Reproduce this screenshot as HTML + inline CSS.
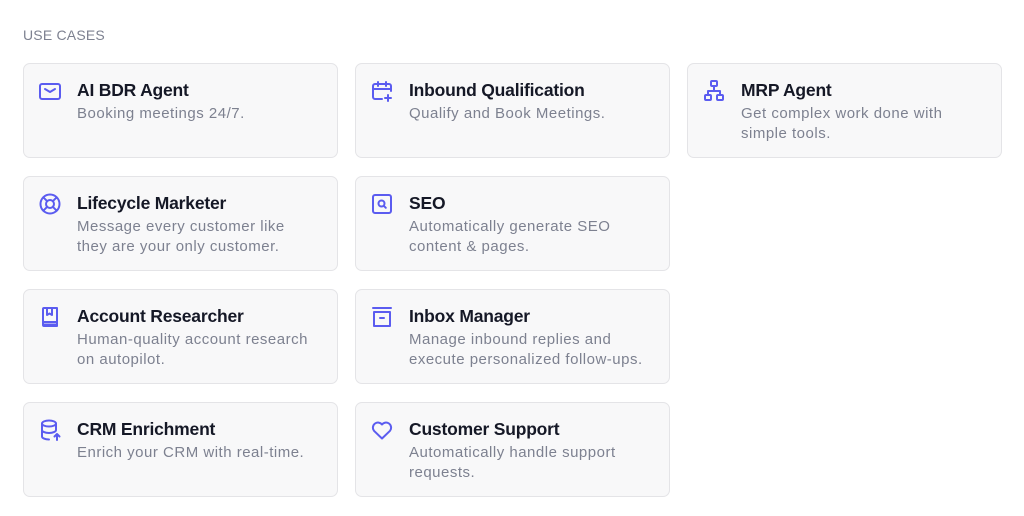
<!DOCTYPE html>
<html><head><meta charset="utf-8"><style>
*{margin:0;padding:0;box-sizing:border-box}
body{width:1024px;height:516px;background:#fff;font-family:"Liberation Sans",sans-serif;position:relative;overflow:hidden}
.h{position:absolute;left:23px;top:27px;font-size:14px;color:#7d8190;letter-spacing:0.2px}
.c{position:absolute;width:315px;height:95px;border:1px solid #e4e4e7;border-radius:7px;background:#f8f8f9}
.c svg{position:absolute;left:14px;top:15px;width:24px;height:24px;fill:none;stroke:#5b5cf0;stroke-width:2;stroke-linecap:round;stroke-linejoin:round}
.t{position:absolute;left:53px;top:16px;font-size:17.5px;font-weight:bold;color:#151826;letter-spacing:-0.2px}
.d{position:absolute;left:53px;top:40px;width:242px;font-size:15px;line-height:20px;color:#7d8190;letter-spacing:0.5px}
</style></head><body>
<div class="h">USE CASES</div>

<div class="c" style="left:23px;top:63px"><svg viewBox="0 0 24 24"><rect x="2" y="5" width="20" height="15" rx="2"/><path d="M7 10l5 3 5-3"/></svg><div class="t">AI BDR Agent</div><div class="d">Booking meetings 24/7.</div></div>
<div class="c" style="left:355px;top:63px"><svg viewBox="0 0 24 24"><path d="M12 20H5a2 2 0 0 1-2-2V7a2 2 0 0 1 2-2h14a2 2 0 0 1 2 2v5M3 10h18M8 3v4M16 3v4M18 16v6M15 19h6"/></svg><div class="t">Inbound Qualification</div><div class="d">Qualify and Book Meetings.</div></div>
<div class="c" style="left:687px;top:63px"><svg viewBox="0 0 24 24"><rect x="9" y="2" width="6" height="5" rx="1"/><rect x="3" y="16" width="6" height="5" rx="1"/><rect x="15" y="16" width="6" height="5" rx="1"/><path d="M12 7v5M6 16v-4h12v4"/></svg><div class="t">MRP Agent</div><div class="d">Get complex work done with simple tools.</div></div>

<div class="c" style="left:23px;top:176px"><svg viewBox="0 0 24 24"><circle cx="12" cy="12" r="9.5"/><circle cx="12" cy="12" r="4"/><path d="M5.3 5.3l3.9 3.9M18.7 5.3l-3.9 3.9M5.3 18.7l3.9-3.9M18.7 18.7l-3.9-3.9"/></svg><div class="t">Lifecycle Marketer</div><div class="d">Message every customer like they are your only customer.</div></div>
<div class="c" style="left:355px;top:176px"><svg viewBox="0 0 24 24"><rect x="3" y="3" width="18" height="18" rx="2"/><circle cx="11.5" cy="11.5" r="3"/><path d="M13.8 13.8l2 2"/></svg><div class="t">SEO</div><div class="d">Automatically generate SEO content &amp; pages.</div></div>

<div class="c" style="left:23px;top:289px"><svg viewBox="0 0 24 24"><path d="M5 4a1 1 0 0 1 1-1h13v18H6a1 1 0 0 1-1-1zM5 17h14M5 19.5h14M9 3v7l2.5-1.5L14 10V3"/></svg><div class="t">Account Researcher</div><div class="d">Human-quality account research on autopilot.</div></div>
<div class="c" style="left:355px;top:289px"><svg viewBox="0 0 24 24"><path d="M3 3h18M4 7h16v14H4zM10 13h4"/></svg><div class="t">Inbox Manager</div><div class="d">Manage inbound replies and execute personalized follow-ups.</div></div>

<div class="c" style="left:23px;top:402px"><svg viewBox="0 0 24 24"><ellipse cx="11" cy="5.5" rx="7" ry="3"/><path d="M4 5.5v13c0 1.6 3 3 7 3M4 12c0 1.6 3 3 7 3s7-1.4 7-3V5.5M19 22v-6M16.5 18.5L19 16l2.5 2.5"/></svg><div class="t">CRM Enrichment</div><div class="d">Enrich your CRM with real-time.</div></div>
<div class="c" style="left:355px;top:402px"><svg viewBox="0 0 24 24"><path d="M12 20.5L4 12.8A5 5 0 0 1 12 6.5a5 5 0 0 1 8 6.3z"/></svg><div class="t">Customer Support</div><div class="d">Automatically handle support requests.</div></div>
</body></html>
